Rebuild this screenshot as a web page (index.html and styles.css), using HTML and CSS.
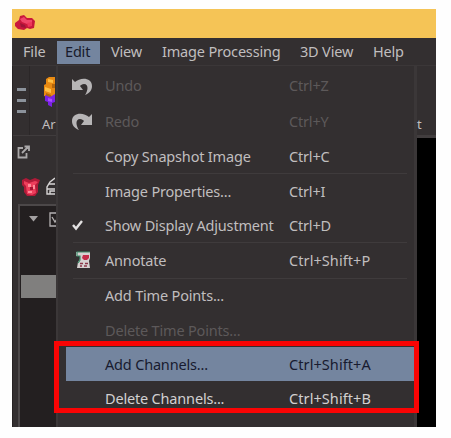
FILE: index.html
```html
<!DOCTYPE html>
<html lang="en">
<head>
<meta charset="utf-8">
<title>Edit menu</title>
<link rel="stylesheet" href="styles.css">
</head>
<body>
<main class="window">
  <header class="titlebar">
    <svg class="logo" width="22" height="18" viewBox="0 0 22 18"><path fill="#c9183c" d="M0 9l4-3 1-4 4-1 3 3 5 0 3 3-1 7-4 1-3-1-3 2-6-1-3-3z"/><path fill="#f0476a" d="M5 5l4-2 3 3 5 0 0 3-5 1-5-2z"/><path fill="#a01438" d="M5 9l5 2 1 3-5-1z"/><path fill="#ed3659" d="M12 9l5-1v4l-4 1z"/></svg>
  </header>
  <nav class="menubar">
    <span class="tab file">File</span><span class="tab edit">Edit</span><span class="tab view">View</span><span class="tab image">Image Processing</span><span class="tab three">3D View</span><span class="tab help">Help</span>
  </nav>
  <div class="body">
    <aside class="side">
      <div class="tools">
        <div class="grip"><i></i><i></i><i></i></div>
        <div class="tool">
          <svg width="14" height="33" viewBox="0 0 14 33"><path fill="#e88a12" d="M4 4l3-2h6v18l-4 3-7-2V10l2-1z"/><path fill="#ffc044" d="M6 4l5 1v3l-5-1zM3 12l6 2v4l-6-2z"/><path fill="#b3660c" d="M10 9h3v4h-3zM4 18l5 2v3l-5-2z"/><path fill="#7b22e6" d="M3 20l5 2 5-3v8l-3 1v4l-4-2v-3l-3-1z"/><path fill="#a94bff" d="M6 23l4 1v3l-4-1z"/></svg>
          <span>Ar</span>
        </div>
      </div>
      <div class="dock">
        <svg width="14" height="14" viewBox="0 0 14 14" fill="none" stroke="#aaa8a9" stroke-width="1.8"><path d="M6 3H1.500v9.500h8V8M5 8l6-6M7.500 1.500H12V6"/></svg>
      </div>
      <div class="objects">
        <svg width="20" height="20" viewBox="0 0 20 20"><path fill="#b01a38" d="M1 3l4-2 4 2 5-2 5 2-2 5 0 7-3 4-8 0-3-4 0-5-2-2z"/><path fill="#ee3e5c" d="M3 4l5 2 6-2 3 1-3 3 1 8-4 2-5-1-1-8-2-2z"/><path fill="#ff8a98" d="M7 7h3v3H7zM12 8h2v4h-2zM7 14h4v2H7z"/><path fill="#a51433" d="M9 10h3v3H9z"/></svg>
        <svg width="10" height="20" viewBox="0 0 10 20" fill="none" stroke="#d6d4d4" stroke-width="1.400"><path d="M10 1L5 5 2 10v7h8M4 7h6M2 12h8M5 17v-3h5"/></svg>
      </div>
      <div class="tree">
        <div class="node">
          <svg width="9" height="6" viewBox="0 0 9 6"><path fill="#a4a1a2" d="M0 0h9L4.500 5.500z"/></svg>
          <svg width="8" height="15" viewBox="0 0 8 15" fill="none" stroke="#b4b1b2" stroke-width="1.300"><path d="M8 1H1v13h7M3 5l3 5 2-3"/></svg>
        </div>
        <div class="selected"></div>
      </div>
    </aside>
    <section class="menu">
      <div class="row off undo"><svg class="ic" width="22" height="20" viewBox="0 0 22 20"><path fill="#b7b5b6" d="M1 3l3 3C9 1 21 1 21 10c0 4-2 7-7 9 3-4 4-11-1-11-2 0-3 1-4 2l3 4H1z"/></svg><span>Undo</span><kbd>Ctrl+Z</kbd></div>
      <div class="row off redo"><svg class="ic flip" width="22" height="20" viewBox="0 0 22 20"><path fill="#b7b5b6" d="M1 3l3 3C9 1 21 1 21 10c0 4-2 7-7 9 3-4 4-11-1-11-2 0-3 1-4 2l3 4H1z"/></svg><span>Redo</span><kbd>Ctrl+Y</kbd></div>
      <div class="row copy"><i></i><span>Copy Snapshot Image</span><kbd>Ctrl+C</kbd></div>
      <hr>
      <div class="row props"><i></i><span>Image Properties...</span><kbd>Ctrl+I</kbd></div>
      <div class="row show"><svg class="check" width="11" height="11" viewBox="0 0 11 11" fill="none" stroke="#e4e2e2" stroke-width="2.400"><path d="M1 5l3 3.500L10 1"/></svg><span>Show Display Adjustment</span><kbd>Ctrl+D</kbd></div>
      <hr>
      <div class="row anno"><svg class="note" width="17" height="18" viewBox="0 0 17 18"><path fill="#d6d0d0" d="M1 1h14v6l-1 3 1 7H2l1-6 2-3V5H1z"/><path fill="none" stroke="#3e8d6c" stroke-width="1.200" d="M15 1H2v4h3v4l-2 3"/><path fill="#c42d4a" d="M8 4h6v3l-2 2H9L7 7z"/><path stroke="#8a3648" stroke-width="1.300" d="M5 12.500h3M10 12.500h3M5 15h2M9 15h3"/></svg><span>Annotate</span><kbd class="wide">Ctrl+Shift+P</kbd></div>
      <hr>
      <div class="row addtime"><i></i><span>Add Time Points...</span></div>
      <div class="row off deltime"><i></i><span>Delete Time Points...</span></div>
      <div class="row active addch"><i></i><span>Add Channels...</span><kbd class="wide">Ctrl+Shift+A</kbd></div>
      <div class="row bright delch"><i></i><span>Delete Channels...</span><kbd class="wide">Ctrl+Shift+B</kbd></div>
    </section>
    <section class="canvas">
      <div class="strip"><span>t</span></div>
    </section>
  </div>
  <div class="callout"></div>
</main>
</body>
</html>
```
FILE: styles.css
```css
* { box-sizing: border-box; }
body { margin: 0; padding: 9px 0 0 12px; width: 451px; height: 438px; overflow: hidden; background: #fefefe; font: 14.5px/20px "Noto Sans", "Open Sans", sans-serif; color: #c0bebf; letter-spacing: -0.18px; }
svg { display: block; flex: none; }
span, kbd { white-space: nowrap; }
.window { position: relative; width: 424px; height: 418px; overflow: hidden; display: flex; flex-direction: column; background: #332f30; }
.titlebar { height: 29px; flex: none; padding: 5px 0 0 3px; background: #f5c456; }
.menubar { height: 28px; flex: none; display: flex; padding-top: 3px; border-bottom: 1px solid #3b3738; }
.tab { height: 23px; line-height: 20px; }
.file { width: 45px; padding-left: 11px; }
.edit { width: 43px; padding-left: 8px; background: #74859f; color: #181b2b; }
.view { width: 62px; padding-left: 11px; }
.image { width: 138px; }
.three { width: 73px; }
.body { display: flex; flex: 1; }
.side { width: 44px; overflow: hidden; border-left: 1px solid #262223; }
.tools { height: 70px; display: flex; border-bottom: 1px solid #403c3d; }
.grip { width: 17px; padding: 22px 0 0 4px; display: flex; flex-direction: column; gap: 8px; border-right: 1px solid #2b2728; }
.grip i { width: 9px; height: 3px; background: #8b929b; }
.tool { padding: 9px 0 0 12px; overflow: hidden; }
.tool span { display: block; line-height: 14px; margin-top: 9px; font-size: 13px; }
.dock { height: 36px; padding: 9px 0 0 4px; }
.objects { height: 32px; display: flex; gap: 4px; padding: 5px 0 0 8px; }
.tree { height: 223px; margin-left: 5px; border: solid #4c4849; border-width: 2px 0 0 2px; background: #231f20; }
.node { height: 69px; display: flex; gap: 11px; padding: 6px 0 0 9px; }
.node svg:first-child { margin-top: 4px; }
.selected { height: 23px; margin-left: 1px; background: #807f7e; }
.menu { width: 361px; padding: 2px 3px 0 8px; border: solid #3b3738; border-width: 0 3px 0 2px; }
.row { height: 34px; display: grid; grid-template-columns: 39px 184px 1fr; align-items: center; margin-right: -3px; }
.row span, .row kbd { padding-bottom: 1px; }
.row kbd { font: inherit; }
.row .wide { letter-spacing: 0.08px; }
.off { color: #5d595a; }
.active { background: #74859f; color: #181b2f; }
.bright { color: #d2d0d0; }
.undo, .redo { height: 35.5px; }
.anno, .addtime { height: 34.5px; }
.ic { margin-left: 5px; }
.flip { transform: scaleX(-1); }
.check { margin-left: 6px; }
.note { margin-left: 9px; }
hr { height: 1px; margin: 0 4px 0 7px; border: 0; background: #3f3b3c; }
.canvas { flex: 1; background: #000; }
.strip { height: 72px; background: #332f30; border-bottom: 3px solid #413d3e; padding-top: 48px; font-size: 13px; }
.callout { position: absolute; left: 42px; top: 332px; width: 365px; height: 72px; border: 5px solid #f90404; }
```
